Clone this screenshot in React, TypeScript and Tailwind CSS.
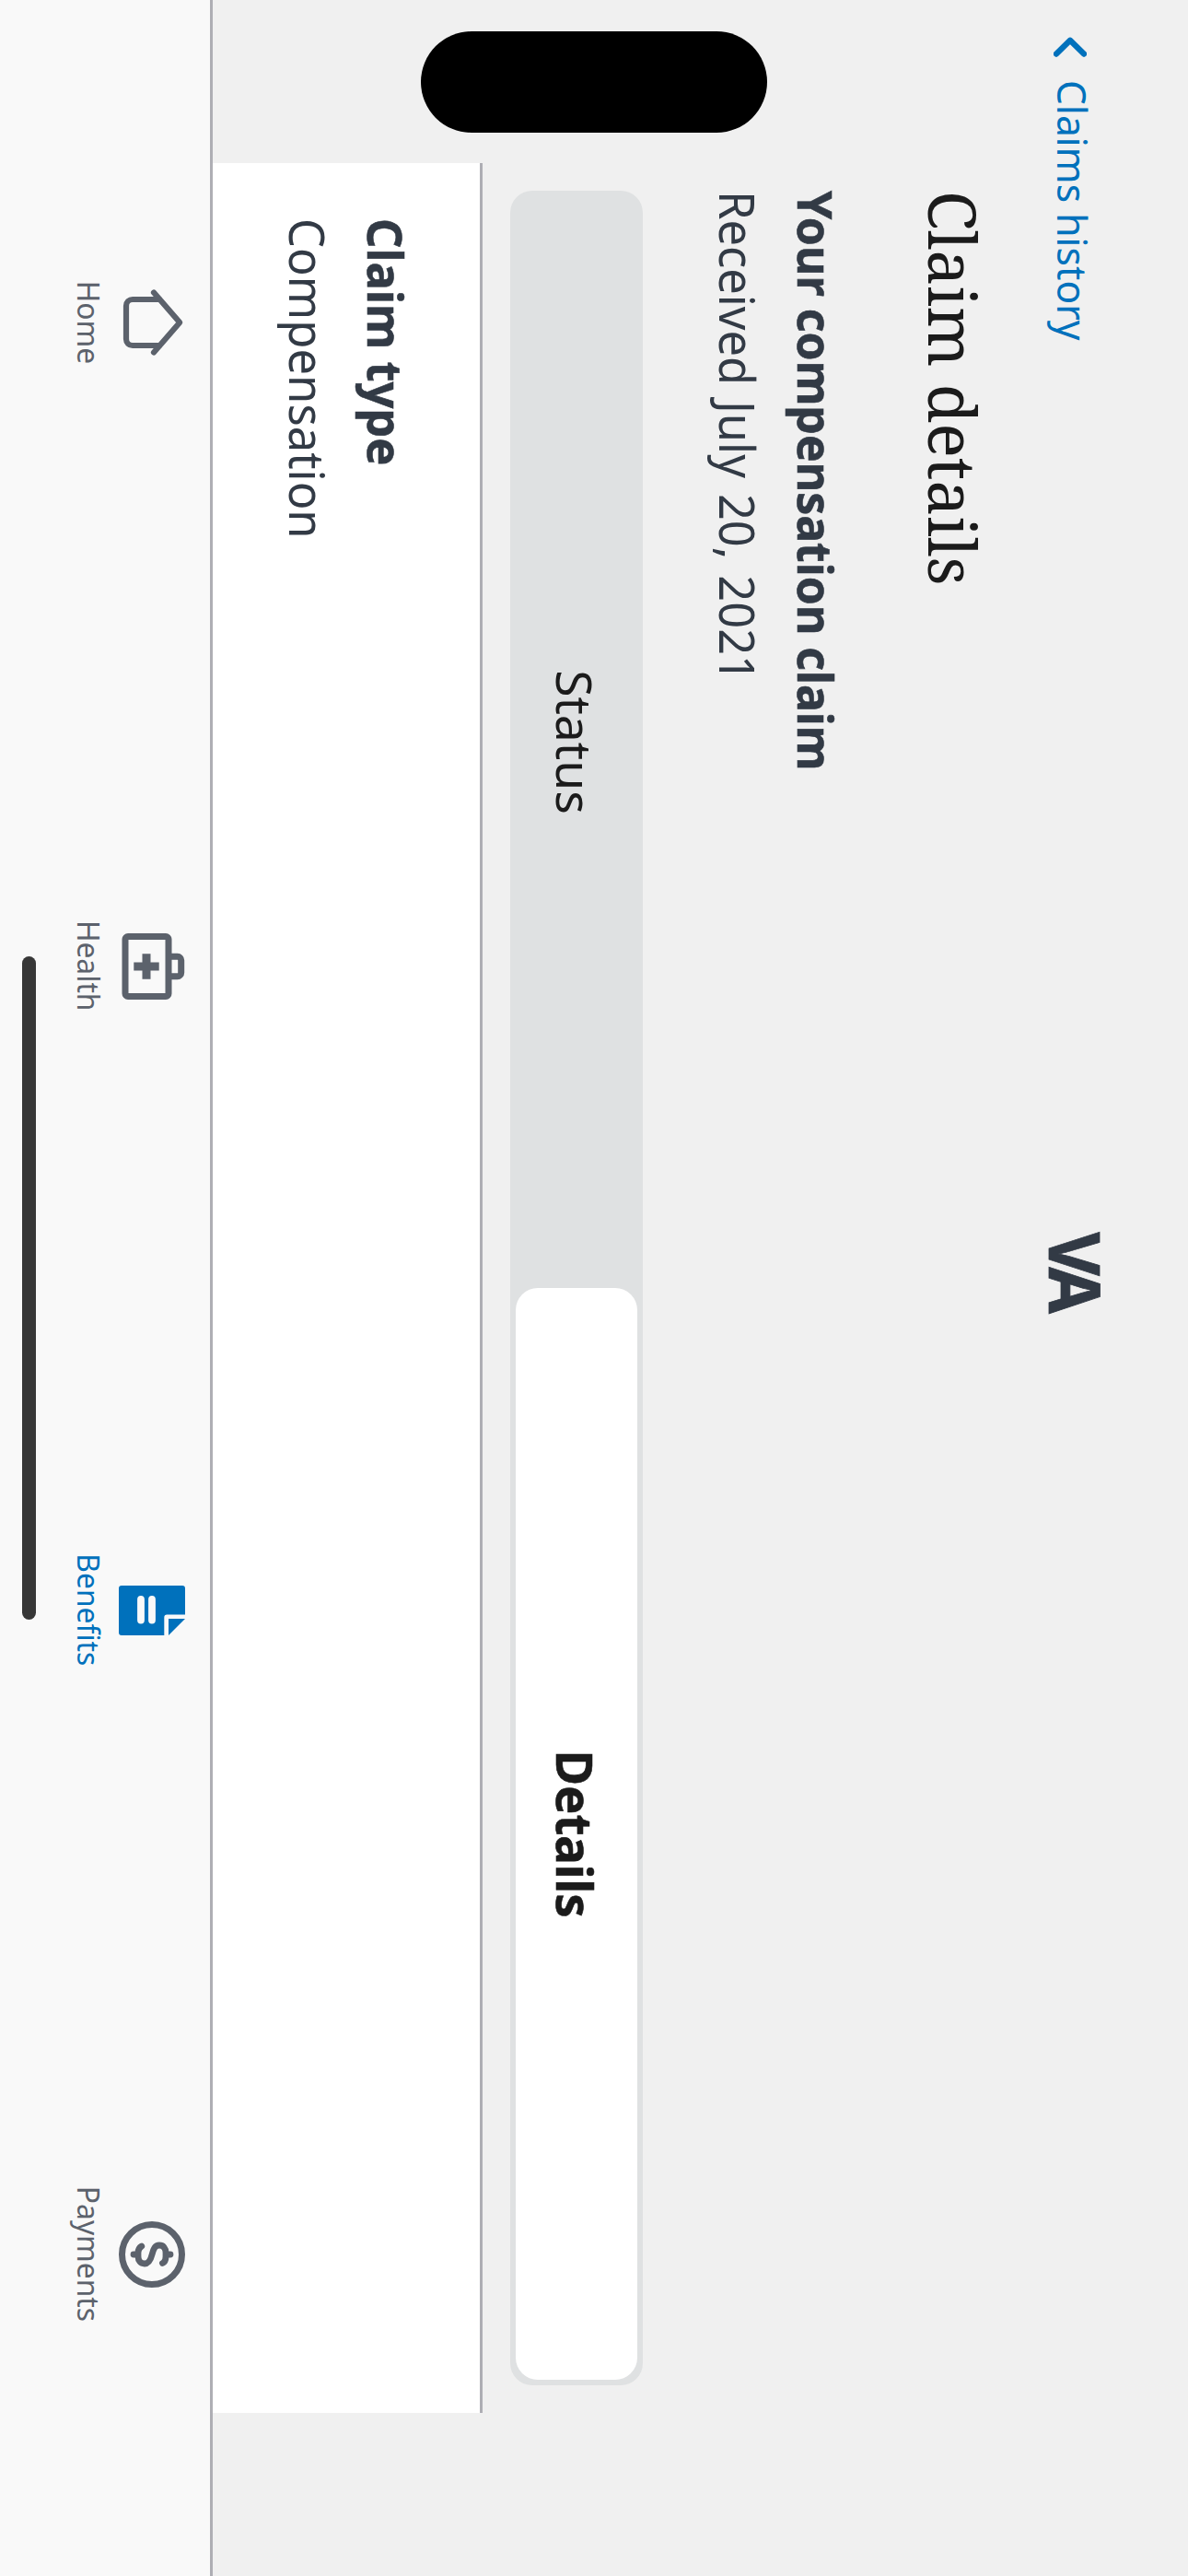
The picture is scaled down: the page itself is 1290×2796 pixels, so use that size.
import type { ReactNode } from 'react';

const sans = "font-['Noto_Sans','Open_Sans',sans-serif]";

/** A single line of text, condensed horizontally from its left edge. */
function Line({ className, children }: { className: string; children: ReactNode }) {
  return (
    <div className="flex">
      <span className={`block origin-left whitespace-pre ${className}`}>{children}</span>
    </div>
  );
}

function HomeIcon() {
  return (
    <svg viewBox="0 0 72 72" className="size-[72px] overflow-visible" fill="none" stroke="currentColor" strokeWidth="6.2" strokeLinecap="round" strokeLinejoin="round">
      <path d="M3.5 34 36 5.8 68.5 34" />
      <path d="M11 28v29a7 7 0 0 0 7 7h36a7 7 0 0 0 7-7V28" />
    </svg>
  );
}

function HealthIcon() {
  return (
    <svg viewBox="0 0 72 72" className="size-[72px] overflow-visible" fill="none" stroke="currentColor" strokeWidth="7">
      <rect x="3.5" y="18" width="65" height="47" rx="3" />
      <path d="M25.3 18V8.3a4 4 0 0 1 4-4h13.4a4 4 0 0 1 4 4V18" />
      <path d="M36 28.3v27.4M22.3 42h27.4" strokeWidth="9" />
    </svg>
  );
}

function BenefitsIcon() {
  return (
    <svg viewBox="0 0 72 72" className="size-[72px] overflow-visible" fill="currentColor">
      <path d="M12 0h28.5v19.7a3 3 0 0 0 3 3H63V69a3 3 0 0 1-3 3H12a3 3 0 0 1-3-3V3a3 3 0 0 1 3-3Z" />
      <path d="M45 0 63 18H45Z" />
      <path d="M24 36h22.5M24 48h22.5" stroke="#f9f9f9" strokeWidth="7.8" strokeLinecap="round" />
    </svg>
  );
}

function PaymentsIcon() {
  return (
    <svg viewBox="0 0 72 72" className="size-[72px] overflow-visible" fill="none" stroke="currentColor" strokeLinecap="round" strokeLinejoin="round">
      <circle cx="36" cy="36" r="32.5" strokeWidth="7" />
      <path d="M36 16v4M36 52v4" strokeWidth="6.8" />
      <path
        d="M45.5 24.5C44.5 22.3 42 21 38.5 21H34C29 21 26 23.7 26 28c0 4.5 3.3 6.2 10 7.9 6.7 1.7 10 3.7 10 8.1 0 4.3-3 7-8 7h-4c-3.3 0-5.5-1.3-7-3.8"
        strokeWidth="6.8"
      />
    </svg>
  );
}

const navItems = [
  { label: 'Home', icon: <HomeIcon />, color: 'text-[#5c626c]' },
  { label: 'Health', icon: <HealthIcon />, color: 'text-[#5c626c]' },
  { label: 'Benefits', icon: <BenefitsIcon />, color: 'text-[#0071bc]' },
  { label: 'Payments', icon: <PaymentsIcon />, color: 'text-[#5c626c]' },
];

function Header() {
  return (
    <header className="grid h-[190px] grid-cols-3 pt-[93px] leading-[64px]">
      <div className="flex pl-[40px] text-[#0071bc]">
        <svg viewBox="0 0 22 36" className="mt-[17px] h-[36px] w-[22px] shrink-0" fill="none" stroke="currentColor" strokeWidth="6.4">
          <path d="M18.5 3 3.8 18l14.7 15" strokeLinecap="round" strokeLinejoin="round" />
        </svg>
        <div className="pl-[25px]">
          <Line className="scale-x-[0.969] text-[44px]">Claims history</Line>
        </div>
      </div>
      <div className="-mt-[3px] flex justify-center pr-[39px]">
        <span className="block origin-center scale-x-[0.95] text-[77px] font-bold tracking-[-7px] text-[#323a45] [-webkit-text-stroke:0.8px]">VA</span>
      </div>
    </header>
  );
}

function SegmentedControl() {
  return (
    <div className="mx-[30px] grid h-[144px] grid-cols-2 rounded-[24px] bg-[#dfe1e2] p-[6px] text-[53.5px] leading-[136px] text-[#1b1b1b]">
      <button className="flex h-[132px] justify-center">
        <span className="block">Status</span>
      </button>
      <button className="flex h-[132px] justify-center rounded-[24px] bg-white font-bold">
        <span className="block scale-x-[0.985] [-webkit-text-stroke:0.6px]">Details</span>
      </button>
    </div>
  );
}

function ClaimCard() {
  return (
    <section className="mt-[30px] h-[293px] border-t-[3px] border-[#aeaeb4] bg-white pt-[59px] pl-[60px] leading-[85px] text-[#323a45]">
      <Line className="scale-x-[0.973] text-[52px] font-bold [-webkit-text-stroke:0.6px]">Claim type</Line>
      <Line className="scale-x-[0.976] text-[52px]">Compensation</Line>
    </section>
  );
}

function TabBar() {
  return (
    <nav className="grid h-[231px] grid-cols-4 border-t-[3px] border-[#aeaeb4] bg-[#f9f9f9]">
      {navItems.map(({ label, icon, color }) => (
        <div key={label} className={`flex flex-col items-center pt-[27px] ${color}`}>
          {icon}
          <span className="mt-[9px] block scale-x-[0.963] text-[33px] leading-[48px]">{label}</span>
        </div>
      ))}
    </nav>
  );
}

export default function App() {
  return (
    <div className="h-[2796px] w-[1290px] overflow-hidden bg-[#f0f0f0]">
      {/* Landscape screen, turned a quarter clockwise */}
      <div className={`relative flex h-[1290px] w-[2796px] origin-top-left translate-x-[1290px] rotate-90 flex-col ${sans}`}>
        <Header />
        <main className="mx-[177px] flex h-[869px] flex-col">
          <div className="h-[402px] pl-[30px] text-[#323a45]">
            <Line className="scale-x-[0.967] pt-[14px] font-['Noto_Serif','DejaVu_Serif_Condensed',serif] text-[72px] leading-[100px] text-[#1b1b1b]">
              Claim details
            </Line>
            <div className="pt-[57px] leading-[85px]">
              <Line className="scale-x-[0.96] text-[52px] font-bold [-webkit-text-stroke:0.6px]">Your compensation claim</Line>
              <Line className="scale-x-[0.972] text-[52px] [word-spacing:4px]">Received July 20, 2021</Line>
            </div>
          </div>
          <SegmentedControl />
          <ClaimCard />
        </main>
        <TabBar />
        {/* Camera cut-out and home indicator float above the page */}
        <div className="absolute top-[457px] left-[33.5px] h-[376px] w-[110.5px] rounded-full bg-black" />
        <div className="absolute top-[1251px] left-[1038px] h-[15px] w-[720px] rounded-full bg-[#373737]" />
      </div>
    </div>
  );
}
